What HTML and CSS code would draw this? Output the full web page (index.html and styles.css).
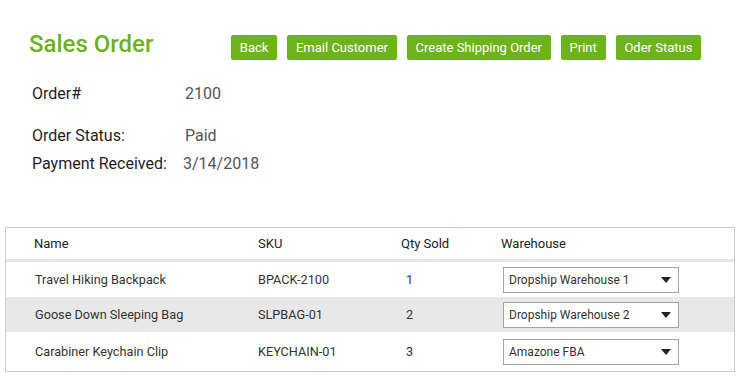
FILE: index.html
```html
<!DOCTYPE html>
<html lang="en">
<head>
  <meta charset="UTF-8">
  <title>Sales Order</title>
  <link rel="stylesheet" href="styles.css">
</head>
<body>
  <div class="page">
    <div class="top">
      <h1 class="title">Sales Order</h1>
      <div class="actions">
        <button class="btn">Back</button>
        <button class="btn">Email Customer</button>
        <button class="btn">Create Shipping Order</button>
        <button class="btn">Print</button>
        <button class="btn">Oder Status</button>
      </div>
    </div>

    <div class="info">
      <div class="info-row first">
        <span class="info-label">Order#</span>
        <span class="info-value">2100</span>
      </div>
      <div class="info-row">
        <span class="info-label">Order Status:</span>
        <span class="info-value">Paid</span>
      </div>
      <div class="info-row">
        <span class="info-label">Payment Received:</span>
        <span class="info-value shift">3/14/2018</span>
      </div>
    </div>

    <div class="items">
      <div class="row head">
        <span>Name</span>
        <span>SKU</span>
        <span>Qty Sold</span>
        <span>Warehouse</span>
      </div>
      <div class="row">
        <span class="c-name">Travel Hiking Backpack</span>
        <span>BPACK-2100</span>
        <span class="c-qty">1</span>
        <div class="select"><span>Dropship Warehouse 1</span><svg width="10" height="6" viewBox="0 0 10 6"><path d="M0 0h10L5 6z" fill="#222"/></svg></div>
      </div>
      <div class="row alt">
        <span class="c-name">Goose Down Sleeping Bag</span>
        <span>SLPBAG-01</span>
        <span class="c-qty">2</span>
        <div class="select"><span>Dropship Warehouse 2</span><svg width="10" height="6" viewBox="0 0 10 6"><path d="M0 0h10L5 6z" fill="#222"/></svg></div>
      </div>
      <div class="row last">
        <span class="c-name">Carabiner Keychain Clip</span>
        <span>KEYCHAIN-01</span>
        <span class="c-qty">3</span>
        <div class="select"><span>Amazone FBA</span><svg width="10" height="6" viewBox="0 0 10 6"><path d="M0 0h10L5 6z" fill="#222"/></svg></div>
      </div>
    </div>
  </div>
</body>
</html>
```

FILE: styles.css
```css
body {
  margin: 0;
  font-family: Roboto, "Liberation Sans", sans-serif;
  background: #fff;
  color: #222;
}

.page {
  width: 740px;
  height: 380px;
  overflow: hidden;
}

.top {
  display: flex;
  align-items: flex-start;
  padding: 31px 0 0 29px;
}

.title {
  margin: 0;
  font-size: 24px;
  font-weight: 500;
  color: #6cb21f;
  line-height: 26px;
  width: 202px;
}

.actions {
  display: flex;
  gap: 10px;
  margin-top: 4px;
}

.btn {
  height: 25px;
  padding: 0 8.8px;
  border: none;
  border-radius: 2px;
  background: #6db41b;
  color: #fff;
  font-family: inherit;
  font-size: 13px;
}

.info {
  padding: 20px 0 0 32px;
}

.info-row {
  display: grid;
  grid-template-columns: 153px auto;
  font-size: 16px;
  line-height: 28px;
}

.info-row.first {
  margin-bottom: 14px;
}

.info-label {
  color: #1e1e1e;
}

.info-value {
  color: #555;
}

.info-value.shift {
  margin-left: -2px;
}

.items {
  margin: 49px 5px 0;
  border: 1px solid #ccc;
}

.row {
  display: grid;
  grid-template-columns: 224px 143px 100px 1fr;
  align-items: center;
  padding-left: 28px;
  height: 35px;
  font-size: 12.7px;
  color: #333;
}

.row.head {
  height: 31px;
  font-size: 13px;
  color: #222;
  border-bottom: 3px solid #e6e6e6;
}

.row.alt {
  background: #e8e8e8;
}

.row.last {
  height: 39px;
}

.c-name {
  padding-left: 1px;
}

.c-qty {
  padding-left: 5px;
}

.select {
  display: flex;
  align-items: center;
  justify-content: space-between;
  width: 176px;
  height: 26px;
  box-sizing: border-box;
  margin-left: 2px;
  padding: 0 7px 0 5px;
  border: 1px solid #a3a3a3;
  background: #fff;
  color: #333;
  font-size: 12px;
}
```
